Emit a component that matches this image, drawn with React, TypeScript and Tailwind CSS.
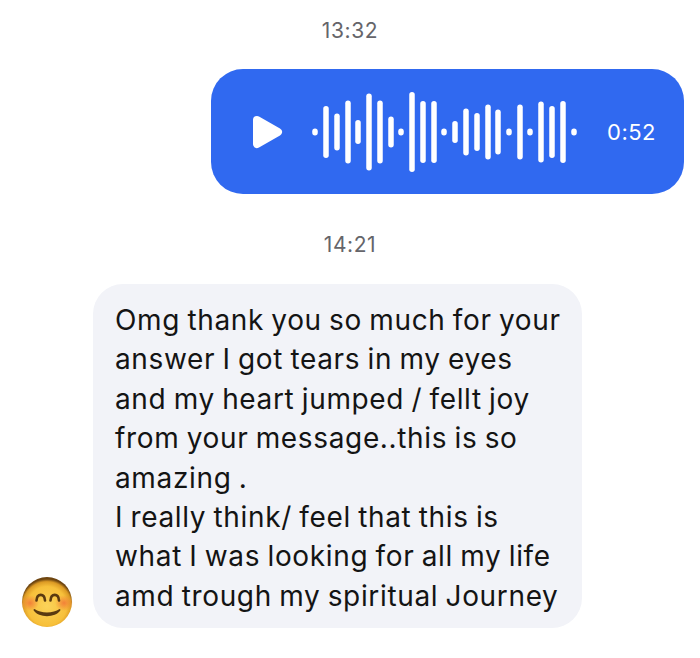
const bars: [number, number][] = [
  [314, 7], [325, 52], [336, 37], [347, 63], [357, 24], [368, 77], [379, 63], [390, 31],
  [400, 7], [411, 80], [422, 62], [433, 62], [443, 7], [454, 22], [465, 47], [476, 38],
  [487, 55], [497, 45], [508, 7], [519, 55], [529, 7], [540, 61], [551, 52], [562, 62], [573, 7],
];

const lines = [
  "Omg thank you so much for your",
  "answer I got tears in my eyes",
  "and my heart jumped / fellt joy",
  "from your message..this is so",
  "amazing .",
  "I really think/ feel that this is",
  "what I was looking for all my life",
  "amd trough my spiritual Journey",
];

function Waveform() {
  return (
    <svg width="270" height="84" viewBox="310 90 270 84" className="shrink-0">
      {bars.map(([x, h], i) => (
        <rect key={i} x={x - 2.75} y={132 - h / 2} width={5.5} height={h} rx={2.75} fill="#fff" />
      ))}
    </svg>
  );
}

function SmileEmoji() {
  return (
    <svg width="52" height="52" viewBox="0 0 52 52" className="shrink-0">
      <defs>
        <radialGradient id="face" cx="50%" cy="58%" r="54%">
          <stop offset="0%" stopColor="#fbd35a" />
          <stop offset="72%" stopColor="#f7c03a" />
          <stop offset="90%" stopColor="#dc9a24" />
          <stop offset="100%" stopColor="#6e4510" />
        </radialGradient>
        <radialGradient id="blush">
          <stop offset="0%" stopColor="#f27a38" stopOpacity="0.9" />
          <stop offset="100%" stopColor="#f27a38" stopOpacity="0" />
        </radialGradient>
      </defs>
      <circle cx="26" cy="26" r="25" fill="url(#face)" />
      <ellipse cx="9" cy="27" rx="9" ry="8" fill="url(#blush)" />
      <ellipse cx="43" cy="27" rx="9" ry="8" fill="url(#blush)" />
      <g fill="none" stroke="#5a3a10" strokeLinecap="round">
        <path d="M15.5 24.5c0.5-7.5 8-7.5 8.5 0" strokeWidth="2.6" />
        <path d="M29.5 24.5c0.5-7.5 8-7.5 8.5 0" strokeWidth="2.6" />
      </g>
      <path d="M13.5 33c6 4.5 19 4.5 25 0 0.8 0 1.2 0.8 0.8 1.5-5 7.5-21.6 7.5-26.6 0-0.4-0.7 0-1.5 0.8-1.5z" fill="#5a3a10" />
    </svg>
  );
}

export default function App() {
  return (
    <div className="w-[700px] h-[658px] bg-white overflow-hidden font-['Inter','Liberation_Sans',sans-serif]">
      <div className="pt-[18px] h-[69px] text-center text-[21px] leading-[25px] tracking-[0.6px] text-[#65656a]">13:32</div>

      <div className="flex justify-end pr-4">
        <div className="w-[473px] h-[125px] rounded-[32px] bg-[#3069f0] flex items-center pl-[41px] text-white">
          <svg width="31" height="36" viewBox="0 0 31 36" className="shrink-0">
            <path d="M5 6 L26 18 L5 30 Z" fill="#fff" stroke="#fff" strokeWidth="8" strokeLinejoin="round" />
          </svg>
          <div className="ml-[28px]">
            <Waveform />
          </div>
          <span className="ml-[26px] text-[22px] leading-6 tracking-[0.5px]">0:52</span>
        </div>
      </div>

      <div className="pt-[38px] h-[90px] text-center text-[21px] leading-[25px] tracking-[0.6px] text-[#65656a]">14:21</div>

      <div className="flex items-end pl-[21px]">
        <SmileEmoji />
        <div className="ml-5 w-[489px] h-[344px] rounded-[30px] bg-[#f2f3f8] pl-[22px] pt-[17px] text-[28px] leading-[39.4px] tracking-[0.65px] [word-spacing:-1.2px] text-[#141414]">
          {lines.map((line) => (
            <div key={line} className="whitespace-nowrap">{line}</div>
          ))}
        </div>
      </div>
    </div>
  );
}
